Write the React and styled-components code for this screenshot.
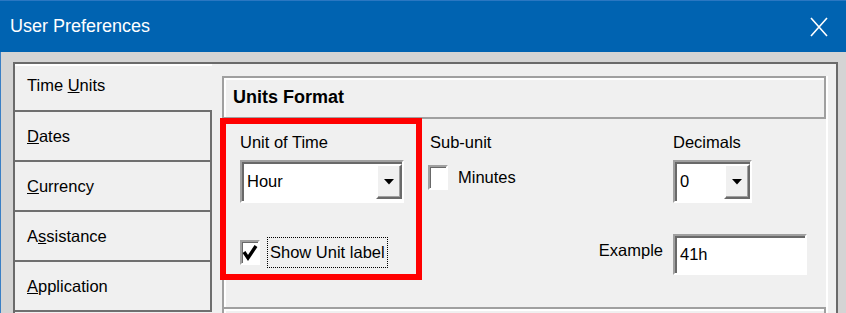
import React from 'react'
import styled, { createGlobalStyle } from 'styled-components'

const GlobalStyle = createGlobalStyle`
  html, body {
    margin: 0;
    padding: 0;
  }
  body {
    background: #d4d4d4;
    font-family: "Liberation Sans", Arial, sans-serif;
    overflow: hidden;
  }
  * {
    box-sizing: border-box;
  }
`

const Window = styled.div`
  width: 846px;
  height: 313px;
  display: flex;
  flex-direction: column;
  background: #d4d4d4;
  overflow: hidden;
`

const TitleBar = styled.div`
  height: 52px;
  flex: none;
  background: #0063b1;
  border-top: 1px solid #2a77c2;
  display: flex;
  align-items: center;
  justify-content: space-between;
  padding: 0 18px 0 10px;
  color: #fff;
  font-size: 18px;
`

const Frame = styled.div`
  flex: 1;
  display: flex;
  min-height: 0;
  padding: 10px 8px 0 12px;
  border-left: 1px solid #3a7fc4;
`

const Dialog = styled.div`
  flex: 1;
  display: flex;
  background: #f0f0f0;
  border-top: 2px solid #6a6a6a;
  border-left: 2px solid #6a6a6a;
  border-right: 2px solid #6a6a6a;
  overflow: hidden;
`

const TabList = styled.div`
  width: 197px;
  flex: none;
  display: flex;
  flex-direction: column;
`

const Tab = styled.div`
  height: ${p => (p.$selected ? 48 : 50)}px;
  flex: none;
  display: flex;
  align-items: center;
  padding: 0 0 ${p => (p.$selected ? 4 : 0)}px 12px;
  border-bottom: 2px solid #6f6f6f;
  border-right: ${p => (p.$selected ? 'none' : '2px solid #6f6f6f')};
  box-shadow: ${p => (p.$selected ? 'inset 0 2px 0 #fff' : 'none')};
  font-size: 16.5px;
  color: #000;
  white-space: pre;
`

const Content = styled.div`
  flex: 1;
  display: flex;
  padding: 12px 8px 0 10px;
`

const Column = styled.div`
  flex: 1;
  display: flex;
  flex-direction: column;
  border-right: 2px solid #fff;
`

const SectionHeader = styled.div`
  height: ${p => p.$height || 43}px;
  flex: none;
  display: flex;
  align-items: center;
  padding-left: 9px;
  border: 2px solid #a0a0a0;
  box-shadow: inset 2px 2px 0 #fff;
  font-size: 18px;
  font-weight: bold;
  color: #000;
`

const Body = styled.div`
  height: 188px;
  flex: none;
  display: flex;
  align-items: flex-start;
  border-left: 2px solid #a0a0a0;
  box-shadow: inset 2px 0 0 #fff;
`

const Highlight = styled.div`
  width: 202px;
  height: 162px;
  flex: none;
  margin: -1px 0 0 -4px;
  position: relative;
  border: 6px solid #ff0000;
  padding: 7px 0 0 14px;
  display: flex;
  flex-direction: column;
`

const Label = styled.div`
  font-size: 16.5px;
  line-height: 23px;
  color: #000;
  white-space: nowrap;
`

const FieldLabel = styled(Label)`
  margin-bottom: 6px;
`

const Combo = styled.div`
  width: ${p => p.$width}px;
  height: 43px;
  display: flex;
  align-items: stretch;
  background: #fff;
  border: 2px solid;
  border-color: #a0a0a0 #fff #fff #a0a0a0;
  box-shadow: inset 2px 2px 0 #696969;
  padding: 2px 0 2px 0;
`

const ComboValue = styled.div`
  flex: 1;
  display: flex;
  align-items: center;
  padding-left: 5px;
  font-size: 16.5px;
  color: #000;
`

const DropButton = styled.div`
  width: 26px;
  flex: none;
  display: flex;
  align-items: center;
  justify-content: center;
  background: #f0f0f0;
  border: 2px solid;
  border-color: #fff #6a6a6a #6a6a6a #fff;
  box-shadow: inset -1px -1px 0 #a0a0a0;
`

const CheckRow = styled.div`
  display: flex;
  align-items: center;
  gap: ${p => p.$gap || 7}px;
  margin-top: ${p => p.$top || 0}px;
`

const Box = styled.div`
  width: 20px;
  height: 25px;
  flex: none;
  display: flex;
  align-items: center;
  justify-content: center;
  background: #fff;
  border: 2px solid;
  border-color: #a0a0a0 #fff #fff #a0a0a0;
  box-shadow: inset 1px 1px 0 #696969;
`

const FocusLabel = styled.div`
  width: 121px;
  height: 31px;
  overflow: hidden;
  border: 1px dotted #000;
  padding-left: 2px;
  font-size: 16.5px;
  line-height: 29px;
  color: #000;
  white-space: nowrap;
`

const Options = styled.div`
  flex: 1;
  margin-left: 8px;
  padding-top: 12px;
  display: grid;
  grid-template-columns: 233px auto;
  column-gap: 10px;
  row-gap: 31px;
  align-items: start;
`

const SubUnit = styled.div`
  display: flex;
  flex-direction: column;
  margin-left: -2px;
`

const ExampleLabel = styled(Label)`
  justify-self: end;
  margin-top: 5px;
`

const TextBox = styled.div`
  width: 134px;
  height: 41px;
  display: flex;
  align-items: center;
  padding-left: 5px;
  background: #fff;
  border: 2px solid;
  border-color: #a0a0a0 #fff #fff #a0a0a0;
  box-shadow: inset 2px 2px 0 #696969;
  font-size: 16.5px;
  color: #000;
`

const Arrow = () => (
  <svg width="10" height="6" viewBox="0 0 10 6">
    <polygon points="0,0 10,0 5,5.5" fill="#000" />
  </svg>
)

const Check = () => (
  <svg width="16" height="21" viewBox="0 0 16 21">
    <polyline points="2,10 6,16 14,4" fill="none" stroke="#000" strokeWidth="3.4" />
  </svg>
)

const CloseIcon = () => (
  <svg width="18" height="20" viewBox="0 0 18 20">
    <path d="M1 1 L17 19 M17 1 L1 19" stroke="#fff" strokeWidth="1.6" fill="none" />
  </svg>
)

const tabs = [
  { key: 'time', label: <>{'Time '}<u>U</u>{'nits'}</>, selected: true },
  { key: 'dates', label: <><u>D</u>{'ates'}</> },
  { key: 'currency', label: <><u>C</u>{'urrency'}</> },
  { key: 'assist', label: <>{'A'}<u>s</u>{'sistance'}</> },
  { key: 'app', label: <><u>A</u>{'pplication'}</> },
]

export default function App() {
  return (
    <Window>
      <GlobalStyle />
      <TitleBar>
        <span>User Preferences</span>
        <CloseIcon />
      </TitleBar>
      <Frame>
        <Dialog>
          <TabList>
            {tabs.map(t => (
              <Tab key={t.key} $selected={t.selected}>{t.label}</Tab>
            ))}
          </TabList>
          <Content>
            <Column>
              <SectionHeader>Units Format</SectionHeader>
              <Body>
                <Highlight>
                  <FieldLabel>Unit of Time</FieldLabel>
                  <Combo $width={164}>
                    <ComboValue>Hour</ComboValue>
                    <DropButton><Arrow /></DropButton>
                  </Combo>
                  <CheckRow $top={34}>
                    <Box><Check /></Box>
                    <FocusLabel>Show Unit label</FocusLabel>
                  </CheckRow>
                </Highlight>
                <Options>
                  <SubUnit>
                    <Label style={{ marginLeft: 2 }}>Sub-unit</Label>
                    <CheckRow $top={11} $gap={10}>
                      <Box />
                      <Label>Minutes</Label>
                    </CheckRow>
                  </SubUnit>
                  <div>
                    <FieldLabel>Decimals</FieldLabel>
                    <Combo $width={79}>
                      <ComboValue>0</ComboValue>
                      <DropButton><Arrow /></DropButton>
                    </Combo>
                  </div>
                  <ExampleLabel>Example</ExampleLabel>
                  <TextBox>41h</TextBox>
                </Options>
              </Body>
              <SectionHeader $height={40} />
            </Column>
          </Content>
        </Dialog>
      </Frame>
    </Window>
  )
}
